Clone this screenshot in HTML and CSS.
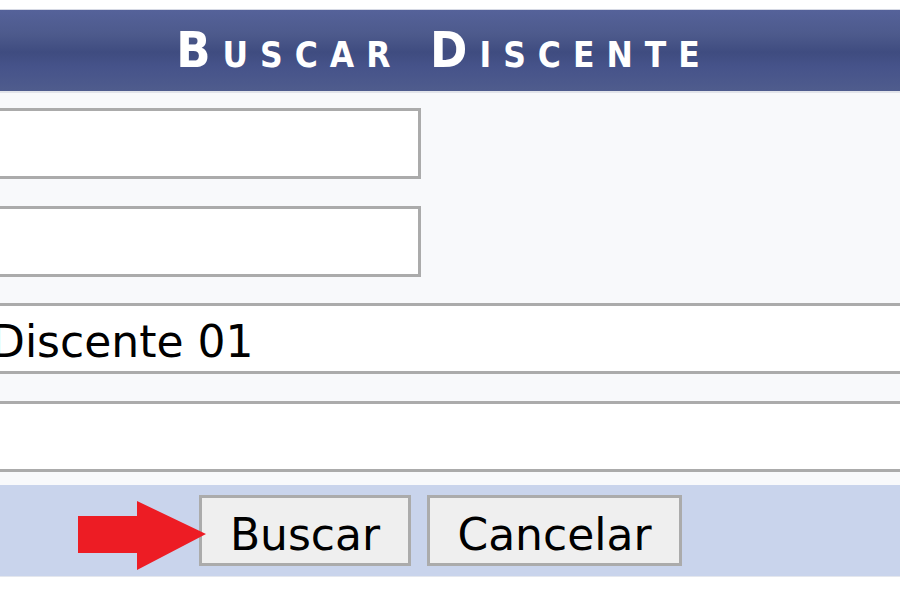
FILE: index.html
```html
<!DOCTYPE html>
<html lang="pt">
<head>
<meta charset="utf-8">
<title>Buscar Discente</title>
<link rel="stylesheet" href="styles.css">
</head>
<body>
<div class="page">
  <div class="header"><h1 class="title">Buscar Discente</h1></div>
  <form class="form">
    <div class="fields">
      <input class="field short" type="text" value="">
      <input class="field short" type="text" value="">
      <input class="field wide" type="text" value="Discente 01">
      <input class="field wide" type="text" value="">
    </div>
    <div class="actions">
      <svg class="arrow" width="128" height="69" viewBox="0 0 128 69" aria-hidden="true">
        <polygon points="0,15 59,15 59,0 128,33 59,69 59,52 0,52" fill="#ed1c24"/>
      </svg>
      <button type="button" class="btn buscar">Buscar</button>
      <button type="button" class="btn cancelar">Cancelar</button>
    </div>
  </form>
</div>
</body>
</html>
```
FILE: styles.css
```css
html, body {
  margin: 0;
  padding: 0;
  background: #ffffff;
  overflow: hidden;
}
.page {
  width: 900px;
  height: 600px;
  overflow: hidden;
  padding-top: 9px;
  box-sizing: border-box;
  font-family: "DejaVu Sans", Verdana, sans-serif;
}
.header {
  border-top: 1px solid #d6d9e4;
  border-bottom: 2px solid #e2e4ea;
  height: 81px;
  background: linear-gradient(#55629a 0%, #4d5a8c 30%, #3f4c80 52%, #46538a 70%, #4f5c8d 100%);
  display: flex;
  align-items: center;
  justify-content: center;
  padding-right: 12px;
}
.title {
  margin: 0;
  color: #ffffff;
  font-family: "DejaVu Sans Condensed", "DejaVu Sans", sans-serif;
  font-weight: bold;
  font-variant: small-caps;
  font-size: 50px;
  letter-spacing: 12px;
  line-height: 1;
  padding-bottom: 2px;
}
.form {
  margin: 0;
  background: #f8f9fb;
}
.fields {
  display: flex;
  flex-direction: column;
  gap: 24px;
  padding: 15px 0 13px;
  margin-left: -60px;
}
.field {
  box-sizing: border-box;
  height: 71px;
  border: 3px solid #ababab;
  background: #ffffff;
  font-family: "DejaVu Sans", Verdana, sans-serif;
  font-size: 44px;
  color: #000000;
  padding: 6px 0 0 48px;
  margin: 0;
  outline: none;
}
.field.short {
  width: 481px;
}
.field.wide {
  width: 1040px;
}
.fields .field:nth-child(2) {
  margin-top: 3px;
}
.fields .field:nth-child(3) {
  margin-top: 2px;
}
.fields .field:nth-child(4) {
  margin-top: 3px;
}
.actions {
  position: relative;
  background: #c9d4ec;
  border-bottom: 1px solid #e4e7ee;
  height: 92px;
  box-sizing: border-box;
  display: flex;
  align-items: flex-start;
  gap: 16px;
  padding: 10px 0 0 199px;
}
.btn {
  box-sizing: border-box;
  height: 71px;
  border: 3px solid #ababab;
  background: #efefef;
  font-family: "DejaVu Sans", Verdana, sans-serif;
  font-size: 44px;
  color: #000000;
  padding: 7px 0 0;
  margin: 0;
}
.buscar {
  width: 212px;
}
.cancelar {
  width: 255px;
}
.arrow {
  position: absolute;
  left: 78px;
  top: 16px;
  z-index: 2;
}
```
